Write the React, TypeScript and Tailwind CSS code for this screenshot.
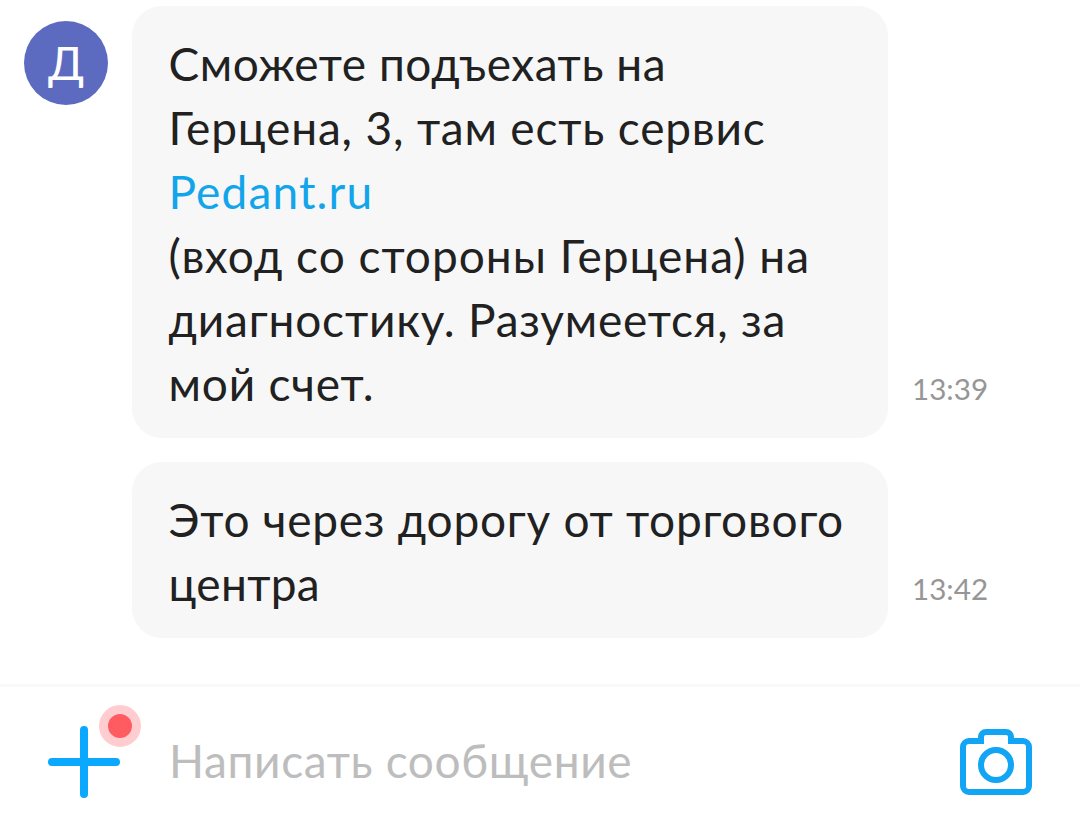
type Line = {
	text: string;
	className: string;
};

type Message = {
	id: number;
	time: string;
	lines: Line[];
};

const messages: Message[] = [
	{
		id: 1,
		time: "13:39",
		lines: [
			{ text: "Сможете подъехать на", className: "tracking-[0.57px]" },
			{ text: "Герцена, 3, там есть сервис", className: "tracking-[0.83px]" },
			{ text: "Pedant.ru", className: "tracking-[1.15px] text-[#12a5ea]" },
			{ text: "(вход со стороны Герцена) на", className: "tracking-[1.01px]" },
			{ text: "диагностику. Разумеется, за", className: "tracking-[0.81px]" },
			{ text: "мой счет.", className: "tracking-[0.8px]" },
		],
	},
	{
		id: 2,
		time: "13:42",
		lines: [
			{ text: "Это через дорогу от торгового", className: "tracking-[0.76px]" },
			{ text: "центра", className: "tracking-[0.35px]" },
		],
	},
];

const MessageRow = ({ message }: { message: Message }) => {
	return (
		<div className="flex items-end">
			<div className="w-[756px] rounded-[30px] bg-[#f7f7f7] pt-[26px] pr-4 pb-[22px] pl-[36.5px]">
				<p className="whitespace-nowrap text-[46px] leading-[64px] text-[#212121]">
					{message.lines.map((line) => (
						<span key={line.text} className={`block ${line.className}`}>
							{line.text}
						</span>
					))}
				</p>
			</div>
			<time className="mb-[29px] ml-6 text-[29.6px] leading-[40px] text-[#969696]">
				{message.time}
			</time>
		</div>
	);
};

const Composer = () => {
	return (
		<div className="flex h-[150px] items-center border-t-3 border-[#f9f9f9] px-12 pt-0.5">
			<button type="button" className="relative size-[72px]">
				<svg viewBox="0 0 72 72" className="size-[72px]" fill="none">
					<path
						d="M36 4v64M4 36h64"
						stroke="#0aa8ff"
						strokeWidth="8"
						strokeLinecap="round"
					/>
				</svg>
				<span className="absolute -top-[21px] left-[51px] size-[42px] rounded-full border-9 border-[#ffcdcf] bg-[#ff5c61]" />
			</button>
			<span className="mb-0.5 ml-[49px] flex-1 text-[46px] leading-[64px] tracking-[0.63px] text-[#bdbdbd]">
				Написать сообщение
			</span>
			<svg viewBox="0 0 72 66" className="h-[66px] w-[72px]" fill="none">
				<path
					d="M21 12V8a5 5 0 0 1 5-5h20a5 5 0 0 1 5 5v4M24 12H9a6 6 0 0 0-6 6v39a6 6 0 0 0 6 6h54a6 6 0 0 0 6-6V18a6 6 0 0 0-6-6H48"
					stroke="#12a5f5"
					strokeWidth="6"
				/>
				<circle cx="36" cy="36" r="15" stroke="#12a5f5" strokeWidth="6" />
			</svg>
		</div>
	);
};

export default function App() {
	return (
		<div className="flex h-[834px] w-[1080px] flex-col overflow-hidden bg-white font-['Lato',sans-serif]">
			<div className="flex h-[684px] pt-[6px] pl-6">
				<div className="mt-[15px] flex size-[84px] items-center justify-center rounded-full bg-[#5c6bc0] text-[46px] leading-none text-white">
					Д
				</div>
				<div className="ml-6 flex flex-col gap-6">
					{messages.map((message) => (
						<MessageRow key={message.id} message={message} />
					))}
				</div>
			</div>
			<Composer />
		</div>
	);
}
